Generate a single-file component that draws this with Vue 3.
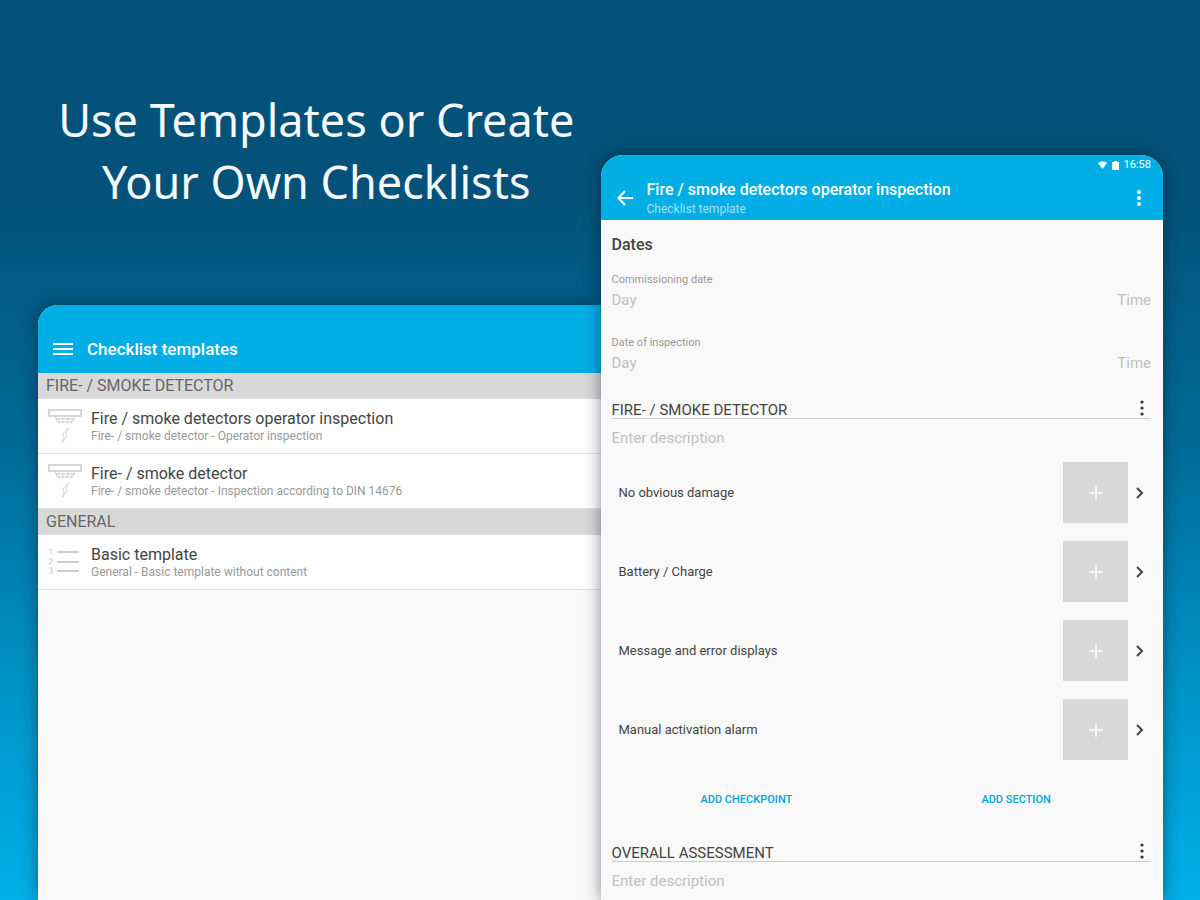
<script setup>
const groups = [
  {
    name: 'FIRE- / SMOKE DETECTOR',
    items: [
      { icon: 'detector', title: 'Fire / smoke detectors operator inspection', detail: 'Fire- / smoke detector - Operator inspection' },
      { icon: 'detector', title: 'Fire- / smoke detector', detail: 'Fire- / smoke detector - Inspection according to DIN 14676' },
    ],
  },
  {
    name: 'GENERAL',
    items: [
      { icon: 'list', title: 'Basic template', detail: 'General - Basic template without content' },
    ],
  },
]

const dates = [
  { id: 'commissioning', label: 'Commissioning date' },
  { id: 'inspection', label: 'Date of inspection' },
]

const sections = [
  {
    name: 'FIRE- / SMOKE DETECTOR',
    checkpoints: ['No obvious damage', 'Battery / Charge', 'Message and error displays', 'Manual activation alarm'],
  },
  { name: 'OVERALL ASSESSMENT', checkpoints: [] },
]
</script>

<template>
  <main class="page">
    <div class="left">
      <h1 class="hero">Use Templates or Create<br />Your Own Checklists</h1>

      <section class="panel templates">
        <header class="bar list-bar">
          <button class="icon-btn" aria-label="Open menu">
            <svg width="20" height="16" viewBox="0 0 20 16" stroke="#fff" stroke-width="2">
              <path d="M0 3h20M0 8h20M0 13h20" />
            </svg>
          </button>
          <h2 class="bar-title">Checklist templates</h2>
        </header>
        <div v-for="group in groups" :key="group.name">
          <h3 class="group-name">{{ group.name }}</h3>
          <ul class="items">
            <li v-for="item in group.items" :key="item.title">
              <a class="item" href="#">
                <svg v-if="item.icon === 'detector'" width="36" height="36" viewBox="0 0 36 36" fill="none" stroke="#d6d6d6" stroke-width="2">
                  <path d="M2 2h32v6H2z" />
                  <path d="M8 8l2 6h16l2-6" stroke-width="1" />
                  <path d="M9 11h18" stroke-width="2" stroke-dasharray="4 1" />
                  <path d="M11 14h14" stroke-width="2" stroke-dasharray="2 2" />
                  <path d="M21 20l-5 6 1 3-2 6 5-7-1-3 3-5z" stroke-width="1" />
                </svg>
                <svg v-else width="36" height="36" viewBox="0 0 36 36" fill="none" stroke="#cfcfcf" stroke-width="2">
                  <path d="M10 8h22M10 18h22M10 27h22" />
                  <path d="M2 6l2-1v5M2 15h3v2l-3 3h3M2 24h3v5H2M3 26h2" stroke-width="1" />
                </svg>
                <span class="item-text">
                  <span class="item-title">{{ item.title }}</span>
                  <span class="item-detail">{{ item.detail }}</span>
                </span>
              </a>
            </li>
          </ul>
        </div>
      </section>
    </div>

    <section class="panel editor">
      <header class="bar">
        <div class="status">
          <svg width="9" height="8" viewBox="0 0 9 8" fill="#fff"><path d="M0 2q4.500-3.500 9 0L4.500 8z" /></svg>
          <svg width="7" height="9" viewBox="0 0 7 9" fill="#fff"><path d="M0 1h2V0h3v1h2v8H0z" /></svg>
          <span>16:58</span>
        </div>
        <div class="editor-bar">
          <button class="icon-btn" aria-label="Back">
            <svg width="16" height="16" viewBox="0 0 16 16" fill="none" stroke="#fff" stroke-width="2">
              <path d="M16 8H2M8 1L1.400 8L8 15" />
            </svg>
          </button>
          <div class="editor-heading">
            <h2 class="editor-title">Fire / smoke detectors operator inspection</h2>
            <p class="subtitle">Checklist template</p>
          </div>
          <button class="icon-btn" aria-label="More options">
            <svg width="6" height="18" viewBox="0 0 6 18" fill="#fff">
              <circle cx="3" cy="3" r="2" /><circle cx="3" cy="9" r="2" /><circle cx="3" cy="15" r="2" />
            </svg>
          </button>
        </div>
      </header>

      <div class="form">
        <h3 class="dates-title">Dates</h3>
        <div v-for="date in dates" :key="date.id" class="date">
          <label :for="date.id">{{ date.label }}</label>
          <div class="date-row">
            <input :id="date.id" class="field" type="text" placeholder="Day" />
            <input class="field time" type="text" placeholder="Time" :aria-label="date.label + ' time'" />
          </div>
        </div>

        <section v-for="section in sections" :key="section.name" class="section">
          <div class="section-head">
            <h3>{{ section.name }}</h3>
            <button class="icon-btn" :aria-label="section.name + ' options'">
              <svg width="6" height="16" viewBox="0 0 6 16" fill="#333">
                <circle cx="3" cy="2" r="1.600" /><circle cx="3" cy="8" r="1.600" /><circle cx="3" cy="14" r="1.600" />
              </svg>
            </button>
          </div>
          <input class="field description" type="text" placeholder="Enter description" :aria-label="section.name + ' description'" />
          <template v-if="section.checkpoints.length">
            <ul class="checkpoints">
              <li v-for="name in section.checkpoints" :key="name" class="checkpoint">
                <span class="checkpoint-name">{{ name }}</span>
                <button class="add-photo" :aria-label="'Add photo to ' + name">
                  <svg width="14" height="14" viewBox="0 0 14 14" stroke="#f4f4f4" stroke-width="2"><path d="M7 0v14M0 7h14" /></svg>
                </button>
                <button class="icon-btn" :aria-label="'Open ' + name">
                  <svg width="8" height="12" viewBox="0 0 8 12" fill="none" stroke="#444" stroke-width="2"><path d="M1 1l5 5-5 5" /></svg>
                </button>
              </li>
            </ul>
            <div class="actions">
              <button>ADD CHECKPOINT</button>
              <button>ADD SECTION</button>
            </div>
          </template>
        </section>
      </div>
    </section>
  </main>
</template>

<style>
body {
  margin: 0;
}
</style>

<style scoped>
.page {
  box-sizing: border-box;
  display: grid;
  grid-template-columns: 1fr 1fr;
  height: 100vh;
  padding: 0 37px 0 38px;
  overflow: hidden;
  background: linear-gradient(#045279 0, #045279 22%, #006b98 50%, #0092c4 75%, #00b0e8 100%);
  font-family: Roboto, "Liberation Sans", sans-serif;
  color: #444;
}
h1, h2, h3, p, ul {
  margin: 0;
  padding: 0;
  font-weight: 400;
  list-style: none;
}
button, input {
  margin: 0;
  padding: 0;
  border: 0;
  background: none;
  font-family: inherit;
  color: inherit;
}
svg {
  display: block;
  flex: none;
}
.left {
  display: flex;
  flex-direction: column;
}
.hero {
  padding: 89px 6px 92px 0;
  font-family: "Noto Sans", sans-serif;
  font-size: 45px;
  line-height: 62px;
  text-align: center;
  white-space: nowrap;
  color: #f4f9fc;
}
.panel {
  background: #f9f9f9;
  box-shadow: 0 0 16px rgba(0, 20, 40, 0.5);
}
.templates {
  flex: 1;
  border-radius: 20px 0 0 0;
}
.editor {
  margin-top: 155px;
  border-radius: 22px 22px 0 0;
  z-index: 1;
}
.bar {
  border-radius: inherit;
  background: #00aee6;
  color: #fff;
}
.icon-btn {
  display: flex;
}
.bar-title {
  font-size: 17px;
  line-height: 20px;
  font-weight: 500;
}
.list-bar {
  display: flex;
  align-items: center;
  gap: 14px;
  padding: 34px 14px 14px 15px;
}
.group-name {
  padding: 0 8px;
  background: #d8d8d8;
  font-size: 16px;
  line-height: 26px;
  color: #666;
}
.item {
  display: flex;
  align-items: center;
  gap: 8px;
  padding: 9px;
  border-bottom: 1px solid #e0e0e0;
  background: #fff;
  color: inherit;
  text-decoration: none;
}
.item-text {
  display: flex;
  flex-direction: column;
  padding-top: 2px;
  white-space: nowrap;
}
.item-title {
  font-size: 16px;
  line-height: 18px;
}
.item-detail {
  font-size: 12px;
  line-height: 16px;
  color: #999;
}
.status {
  display: flex;
  justify-content: flex-end;
  align-items: center;
  gap: 5px;
  padding: 4px 12px 0 0;
  font-size: 11px;
  line-height: 12px;
}
.editor-bar {
  display: flex;
  align-items: center;
  gap: 14px;
  padding: 8px 21px 3px 16px;
}
.editor-heading {
  flex: 1;
  white-space: nowrap;
}
.editor-title {
  font-size: 16px;
  line-height: 22px;
  font-weight: 500;
}
.subtitle {
  font-size: 12px;
  line-height: 16px;
  color: #a5e0f6;
}
.form {
  padding: 14px 12px 0 11px;
}
.dates-title {
  font-size: 16px;
  line-height: 22px;
  font-weight: 500;
  margin-bottom: 16px;
}
.date {
  margin-bottom: 23px;
}
.date label {
  display: block;
  font-size: 11px;
  line-height: 16px;
  color: #999;
}
.date-row {
  display: flex;
  justify-content: space-between;
}
.field {
  display: block;
  width: 50%;
  height: 24px;
  font-size: 15px;
}
.field::placeholder {
  color: #c0c0c0;
  opacity: 1;
}
.time {
  text-align: right;
}
.section-head {
  display: flex;
  align-items: center;
  justify-content: space-between;
  padding: 0 6px 0 0;
  border-bottom: 1px solid #ccc;
}
.section-head h3 {
  padding-top: 4px;
  font-size: 15px;
  line-height: 16px;
}
.description {
  width: 100%;
  height: 38px;
}
.checkpoints {
  margin-top: 5px;
}
.checkpoint {
  display: flex;
  align-items: center;
  gap: 8px;
  height: 61px;
  margin-bottom: 18px;
  padding: 0 7px;
}
.checkpoint-name {
  flex: 1;
  font-size: 13px;
}
.add-photo {
  display: flex;
  align-items: center;
  justify-content: center;
  width: 65px;
  height: 61px;
  background: #d8d8d8;
}
.actions {
  display: grid;
  grid-template-columns: 1fr 1fr;
  padding: 10px 0 29px;
}
.actions button {
  font-size: 11px;
  line-height: 24px;
  font-weight: 500;
  color: #00a5dc;
}
</style>
